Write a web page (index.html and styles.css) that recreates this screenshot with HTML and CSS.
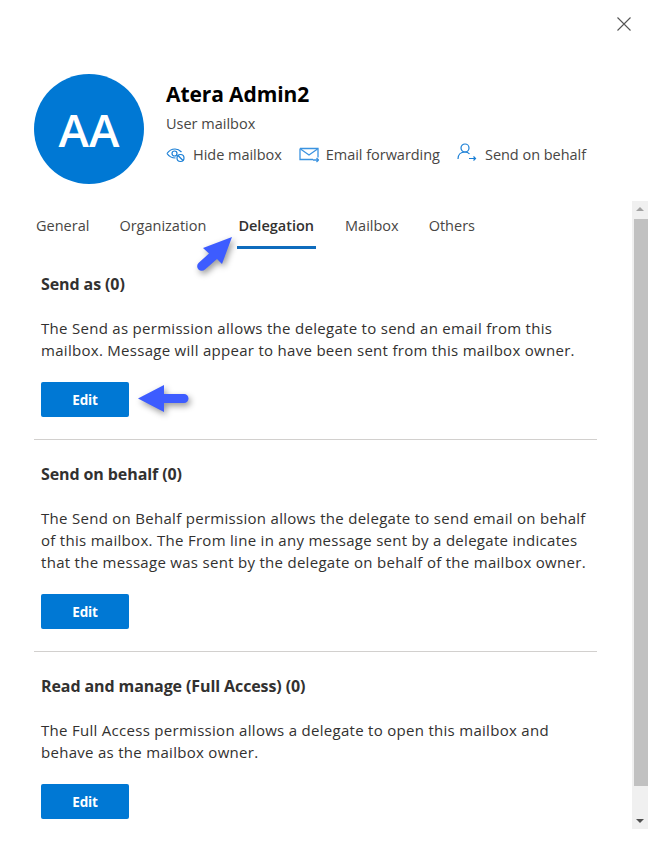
FILE: index.html
```html
<!DOCTYPE html>
<html lang="en">
<head>
<meta charset="utf-8">
<title>Atera Admin2</title>
<link rel="stylesheet" href="styles.css">
</head>
<body>
<div class="panel">
  <div class="topbar">
    <svg class="close" width="16" height="16" viewBox="0 0 16 16"><path d="M1.500 1.500l13 13M14.500 1.500l-13 13" stroke="#555" stroke-width="1.100" fill="none"/></svg>
  </div>
  <header class="header">
    <div class="avatar">AA</div>
    <div class="info">
      <h1 class="name">Atera Admin2</h1>
      <div class="kind">User mailbox</div>
      <div class="actions">
        <div class="action">
          <svg class="icon" width="20" height="18" viewBox="0 0 20 18" fill="none" stroke="#1a7fd6" stroke-width="1.200"><path d="M1 7.500C3 4.500 6 3 9 3c2.500 0 4.500 1 6.500 3"/><path d="M1 7.500C3 10.500 6 12 9.500 12"/><circle cx="8.500" cy="7.500" r="2.500"/><circle cx="14.500" cy="12" r="3.500"/><path d="M12 9.500l5 5"/></svg>
          <span>Hide mailbox</span>
        </div>
        <div class="action">
          <svg class="icon" width="20" height="18" viewBox="0 0 20 18" fill="none" stroke="#3b93e0" stroke-width="1.300"><path d="M1 2.500h18v9M14 13.500H1v-11"/><path d="M1.500 3l8.500 6 8.500-6"/><path d="M14 14h5.500M17.500 12l2 2-2 2"/></svg>
          <span>Email forwarding</span>
        </div>
        <div class="action">
          <svg class="icon send-icon" width="20" height="20" viewBox="0 0 20 20" fill="none" stroke="#1a7fd6" stroke-width="1.200"><circle cx="8" cy="5" r="4"/><path d="M1 16c0-4 2.500-7 7-7 2 0 3.500.7 4.500 2"/><path d="M12 15.500h6.500M16.500 13.500l2 2-2 2"/></svg>
          <span>Send on behalf</span>
        </div>
      </div>
    </div>
  </header>
  <div class="body">
    <div class="main">
      <nav class="tabs">
        <div class="tab">General</div>
        <div class="tab">Organization</div>
        <div class="tab active">Delegation</div>
        <div class="tab">Mailbox</div>
        <div class="tab">Others</div>
      </nav>
      <main class="content">
        <section class="section">
          <h2 class="title">Send as (0)</h2>
          <p class="text">The Send as permission allows the delegate to send an email from this mailbox. Message will appear to have been sent from this mailbox owner.</p>
          <button class="edit">Edit</button>
        </section>
        <section class="section">
          <h2 class="title">Send on behalf (0)</h2>
          <p class="text">The Send on Behalf permission allows the delegate to send email on behalf of this mailbox. The From line in any message sent by a delegate indicates that the message was sent by the delegate on behalf of the mailbox owner.</p>
          <button class="edit">Edit</button>
        </section>
        <section class="section">
          <h2 class="title">Read and manage (Full Access) (0)</h2>
          <p class="text">The Full Access permission allows a delegate to open this mailbox and behave as the mailbox owner.</p>
          <button class="edit">Edit</button>
        </section>
      </main>
    </div>
    <div class="scrollbar">
      <div class="arrow-up"></div>
      <div class="thumb"></div>
      <div class="arrow-down"></div>
    </div>
  </div>
  <svg class="pointer pointer-tab" width="50" height="50" viewBox="0 0 50 50"><path d="M41 9L12 20l6 5.500L7.500 35a4.500 4.500 0 0 0 6.500 6.500L26 31l5 5z" fill="#3d5cff"/></svg>
  <svg class="pointer pointer-edit" width="60" height="36" viewBox="0 0 60 36"><path d="M4 17.500L30 4v9h20a4.500 4.500 0 0 1 0 9H30v9z" fill="#3d5cff"/></svg>
</div>
</body>
</html>
```
FILE: styles.css
```css
* { box-sizing: border-box; }
html, body { margin: 0; padding: 0; background: #fff; }
body { font-family: "Open Sans", "Noto Sans", sans-serif; color: #323130; overflow: hidden; }
.panel { position: relative; width: 648px; height: 864px; overflow: hidden; }
.topbar { height: 74px; display: flex; justify-content: flex-end; padding: 16px 16px 0 0; }
.header { display: flex; gap: 22px; padding-left: 34px; height: 127px; }
.avatar { width: 110px; height: 110px; border-radius: 50%; background: #0078d4; color: #fff; display: flex; align-items: center; justify-content: center; font-size: 46px; font-weight: 600; }
.info { display: flex; flex-direction: column; }
.name { margin: 6px 0 0; font-size: 21px; line-height: 28px; font-weight: 700; color: #000; letter-spacing: -0.1px; }
.kind { margin-top: 6px; font-size: 14.500px; line-height: 20px; color: #484644; }
.actions { display: flex; gap: 17px; margin-top: 11px; }
.action { display: flex; align-items: center; gap: 7px; font-size: 14.500px; line-height: 20px; color: #484644; letter-spacing: -0.03px; }
.send-icon { margin-top: -4px; margin-right: 1px; }
.body { display: flex; height: 628px; }
.main { width: 632px; display: flex; flex-direction: column; overflow: hidden; }
.tabs { display: flex; flex: none; padding-left: 36px; gap: 30px; height: 48px; font-size: 14.500px; color: #484644; }
.tab { padding: 15px 0 0; line-height: 20px; height: 48px; }
.tab.active { font-weight: 600; color: #323130; border-bottom: 3px solid #0f6cbd; padding-left: 1px; padding-right: 2px; margin-left: 1px; margin-right: -1px; }
.content { padding: 1px 35px 0 34px; }
.section { padding: 24px 0 22px 7px; border-bottom: 1px solid #d2d0ce; }
.section:last-child { border-bottom: 0; }
.title { margin: 0; font-size: 16px; line-height: 20px; font-weight: 700; color: #323130; letter-spacing: -0.1px; }
.text { margin: 23px 0 0; font-size: 15px; line-height: 22px; color: #323130; letter-spacing: 0.29px; }
.edit { display: block; width: 88px; height: 35px; margin-top: 21px; padding: 1px 0 0; border: 0; border-radius: 2px; background: #0078d4; color: #fff; font: 700 13.500px "Open Sans", sans-serif; letter-spacing: -0.2px; }
.scrollbar { width: 16px; background: #f0f0f0; position: relative; padding: 18px 0 43px 2px; }
.thumb { height: 100%; background: #c1c1c1; }
.arrow-up, .arrow-down { position: absolute; left: 4px; width: 0; height: 0; border-left: 4px solid transparent; border-right: 4px solid transparent; }
.arrow-up { top: 6px; border-bottom: 4px solid #a3a3a3; }
.arrow-down { bottom: 6px; border-top: 4px solid #505050; }
.pointer { position: absolute; filter: drop-shadow(2px 3px 3px rgba(0,0,0,.4)); }
.pointer-tab { left: 191px; top: 228px; }
.pointer-edit { left: 134px; top: 381px; }
```
